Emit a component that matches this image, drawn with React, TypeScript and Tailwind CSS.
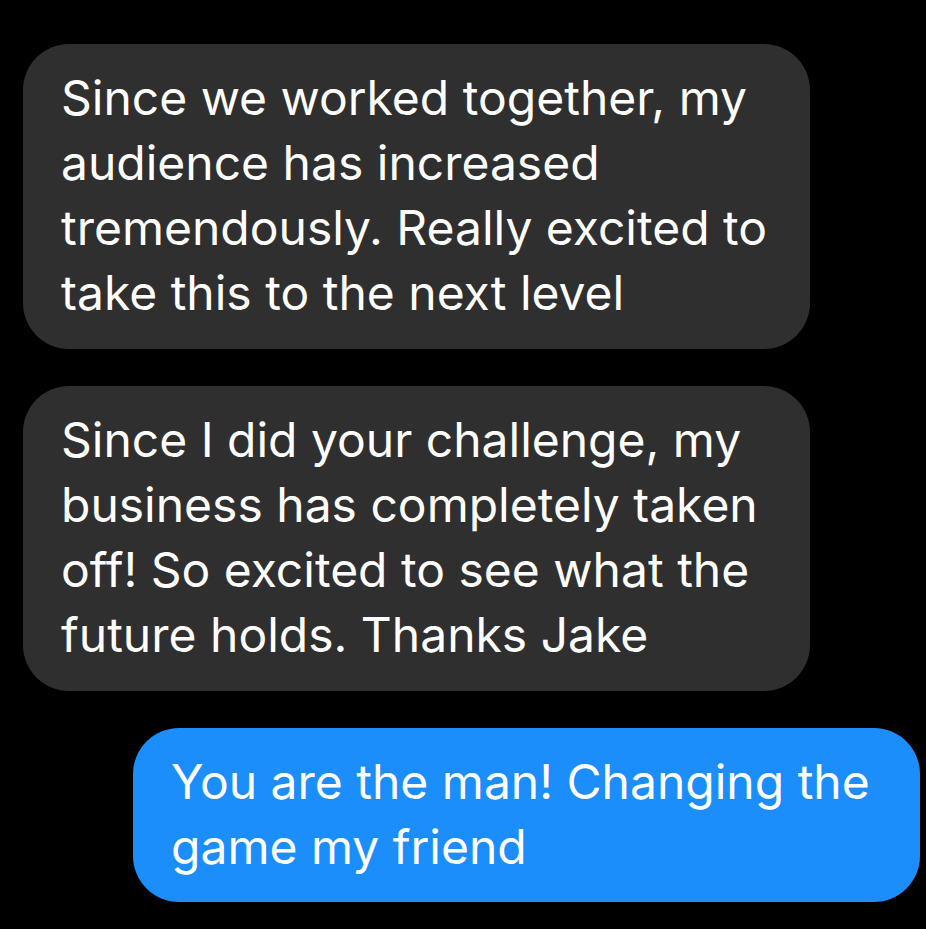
export default function App() {
  const font = { fontFamily: 'Inter, "Liberation Sans", Arial, sans-serif' };
  return (
    <div className="min-h-[929px] w-[926px] bg-black pt-[44px]" style={font}>
      <div className="flex flex-col gap-[37px]">
        <div className="ml-[23px] w-[787px] self-start rounded-[46px] bg-[#2f2f2f] pt-[21px] pb-[24px] pl-[38px] pr-[30px] text-[48px] leading-[65px] text-white">
          Since we worked together, my
          <br />
          audience has increased
          <br />
          tremendously. Really excited to
          <br />
          take this to the next level
        </div>
        <div className="ml-[23px] w-[787px] self-start rounded-[46px] bg-[#2f2f2f] pt-[21px] pb-[24px] pl-[38px] pr-[30px] text-[48px] leading-[65px] text-white">
          Since I did your challenge, my
          <br />
          business has completely taken
          <br />
          off! So excited to see what the
          <br />
          future holds. Thanks Jake
        </div>
        <div className="mr-[6px] w-[787px] self-end rounded-[46px] bg-[#1b8efb] pt-[21px] pb-[23px] pl-[38px] pr-[30px] text-[48px] leading-[65px] text-white">
          You are the man! Changing the
          <br />
          game my friend
        </div>
      </div>
    </div>
  );
}
